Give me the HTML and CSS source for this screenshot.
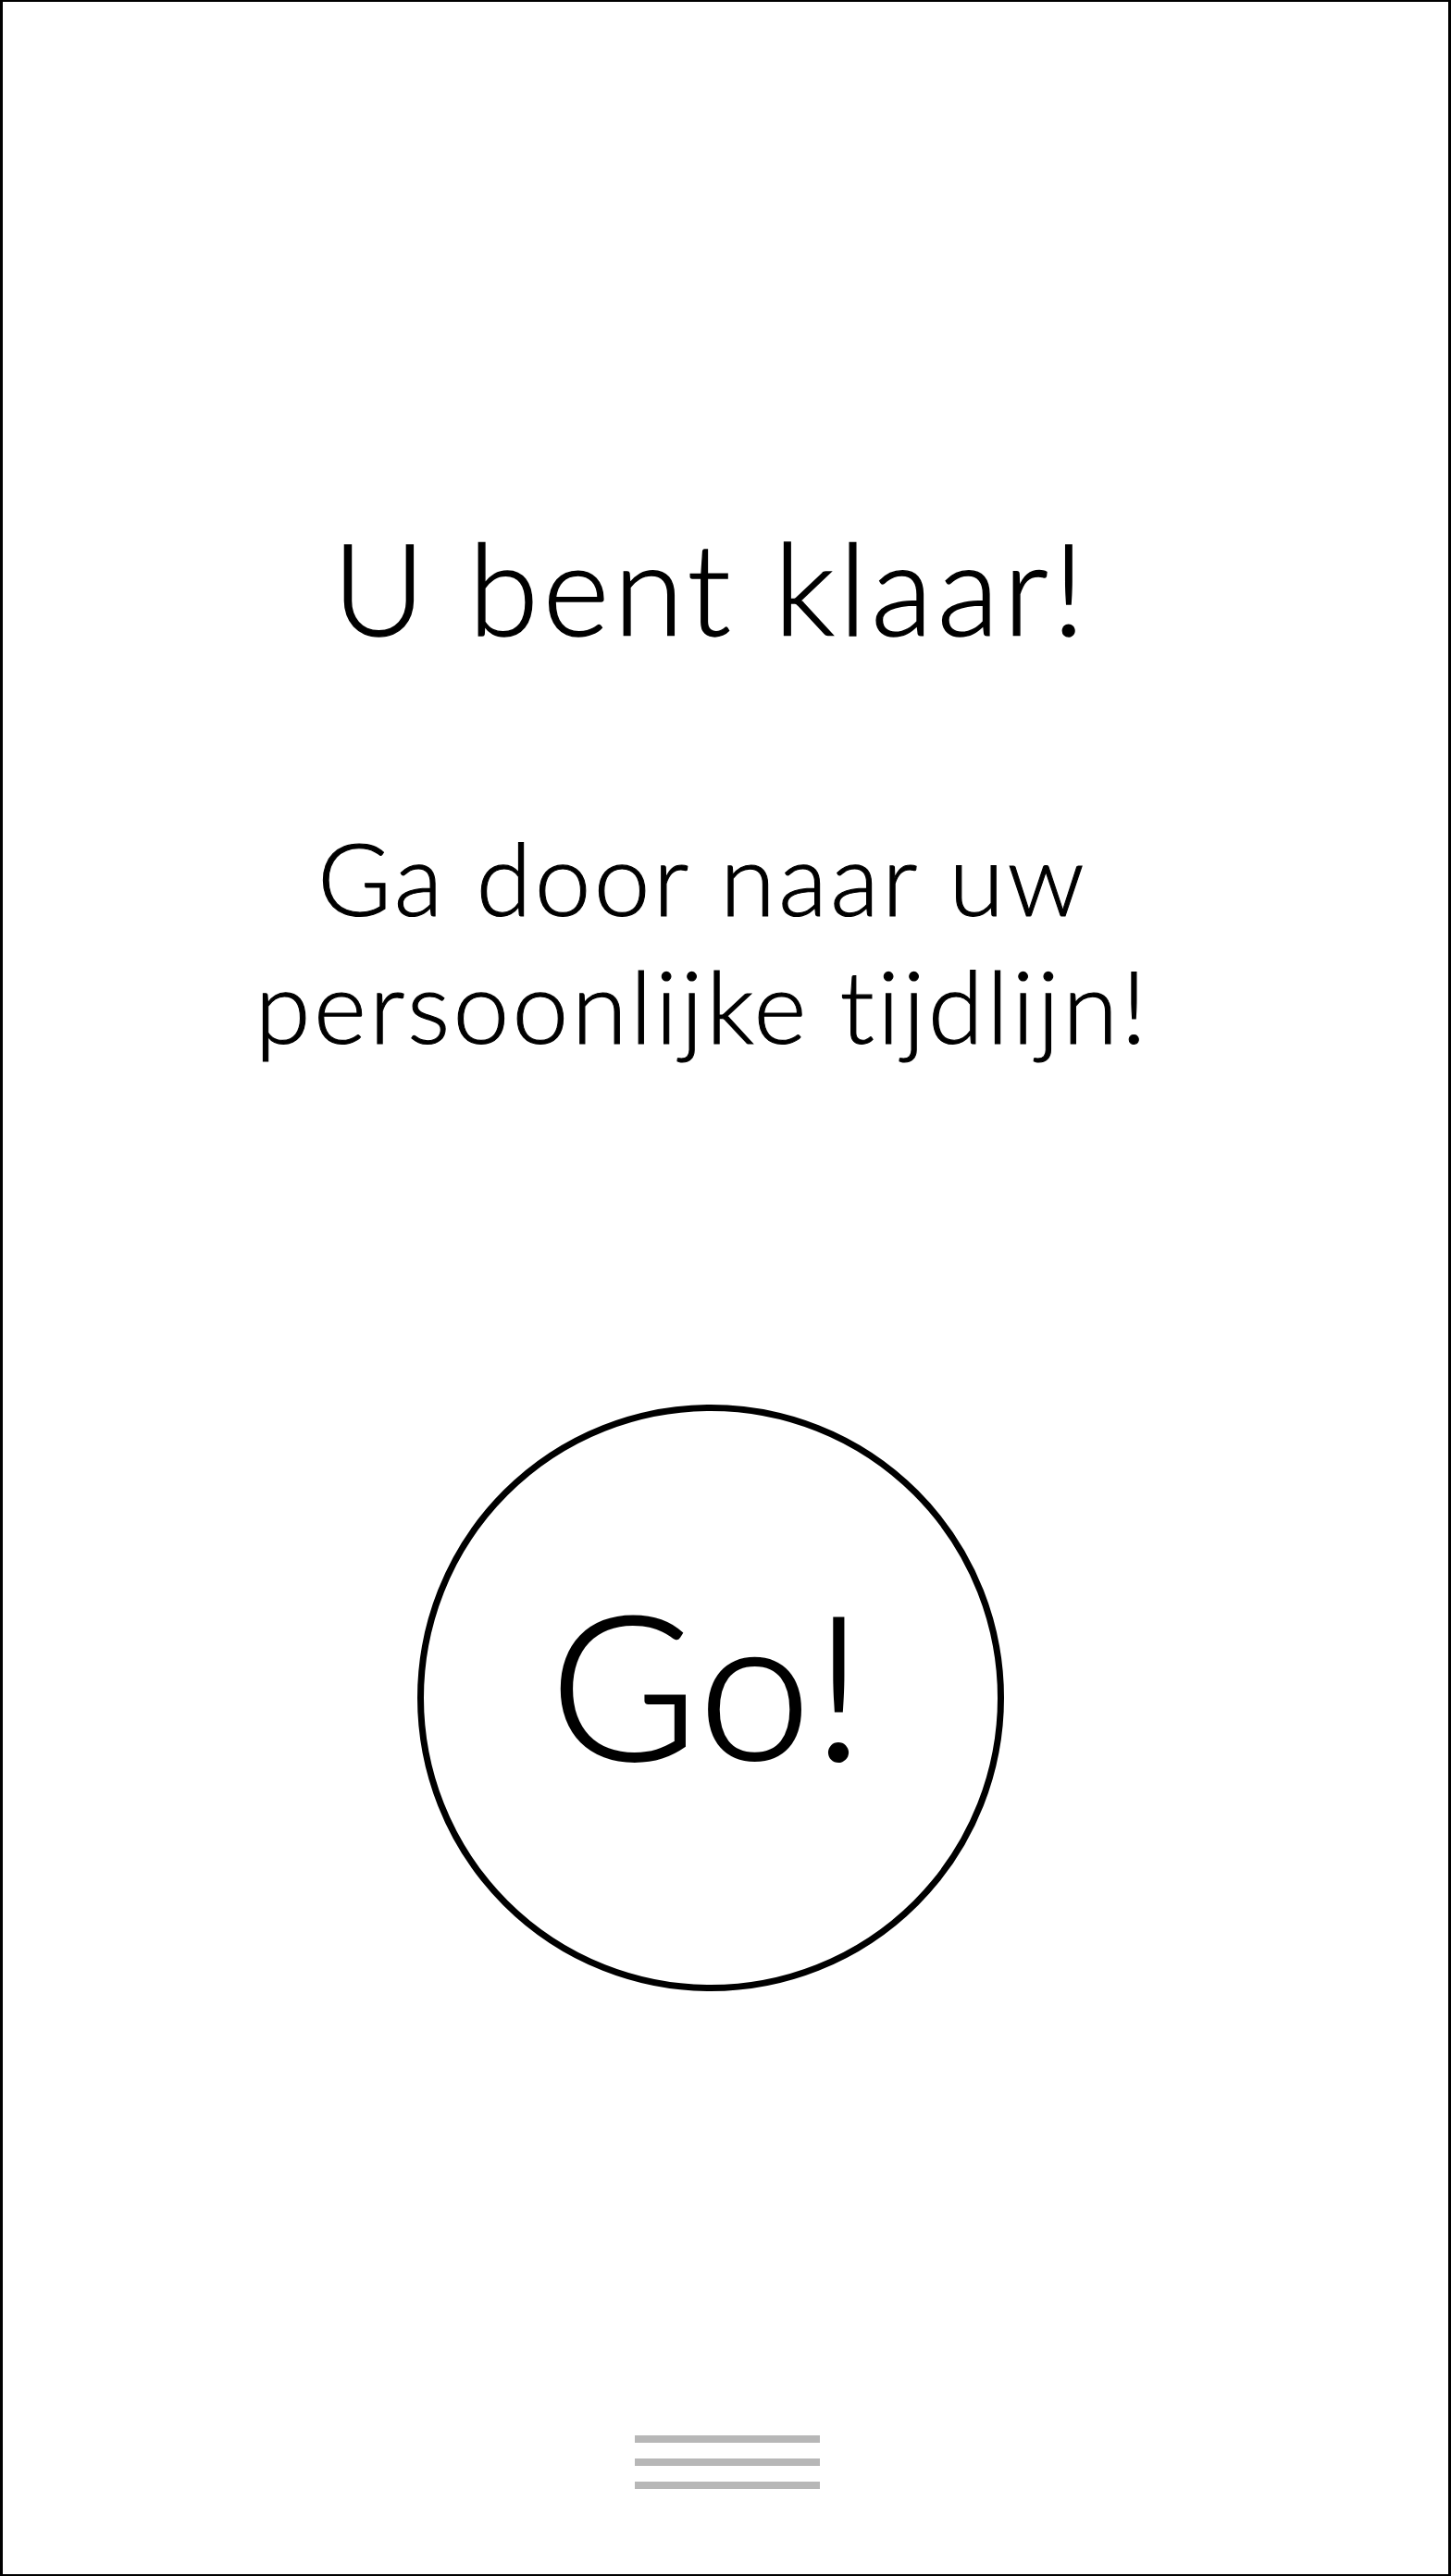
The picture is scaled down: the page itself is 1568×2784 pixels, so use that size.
FILE: index.html
```html
<!DOCTYPE html>
<html lang="nl">
<head>
<meta charset="utf-8">
<title>U bent klaar!</title>
<link rel="stylesheet" href="styles.css">
</head>
<body>
<div class="frame">
  <main class="content">
    <h1 class="title">U bent klaar!</h1>
    <p class="subtitle">Ga door naar uw<br>persoonlijke tijdlijn!</p>
    <button class="go-button" type="button">Go!</button>
  </main>
  <div class="menu-handle" aria-hidden="true">
    <span class="menu-line"></span>
    <span class="menu-line"></span>
    <span class="menu-line"></span>
  </div>
</div>
</body>
</html>
```

FILE: styles.css
```css
html, body {
  margin: 0;
  padding: 0;
  background: #ffffff;
}

body {
  font-family: "Lato", "Noto Sans", "Liberation Sans", sans-serif;
  font-variant-ligatures: none;
  font-feature-settings: "liga" 0, "clig" 0;
  color: #000000;
}

.frame {
  box-sizing: border-box;
  width: 1568px;
  height: 2784px;
  border-style: solid;
  border-color: #000000;
  border-width: 2px 3px 2px 3px;
  display: flex;
  flex-direction: column;
  background: #ffffff;
}

.content {
  display: flex;
  flex-direction: column;
  align-items: center;
  padding-right: 32px;
  flex: 1;
}

.title {
  margin: 549px 0 0 0;
  font-size: 138px;
  line-height: 1.2;
  font-weight: 300;
  letter-spacing: 4.5px;
  -webkit-text-stroke: 1.4px #000000;
  text-align: center;
}

.subtitle {
  margin: 162px 0 0 0;
  padding-right: 18px;
  font-size: 109px;
  line-height: 138px;
  font-weight: 300;
  letter-spacing: 3.2px;
  -webkit-text-stroke: 1.1px #000000;
  text-align: center;
}

.go-button {
  box-sizing: border-box;
  margin-top: 363px;
  width: 634px;
  height: 634px;
  border: 7px solid #000000;
  border-radius: 50%;
  background: #ffffff;
  display: flex;
  align-items: center;
  justify-content: center;
  padding: 0 6px 34px 0;
  font-family: inherit;
  font-size: 218px;
  font-weight: 300;
  letter-spacing: 2px;
  -webkit-text-stroke: 2px #000000;
  line-height: 1.2;
  color: #000000;
  cursor: pointer;
}

.menu-handle {
  align-self: center;
  display: flex;
  flex-direction: column;
  gap: 17px;
  margin-bottom: 92px;
  margin-left: 4px;
}

.menu-line {
  display: block;
  width: 200px;
  height: 8px;
  background: #b7b7b7;
}
```
